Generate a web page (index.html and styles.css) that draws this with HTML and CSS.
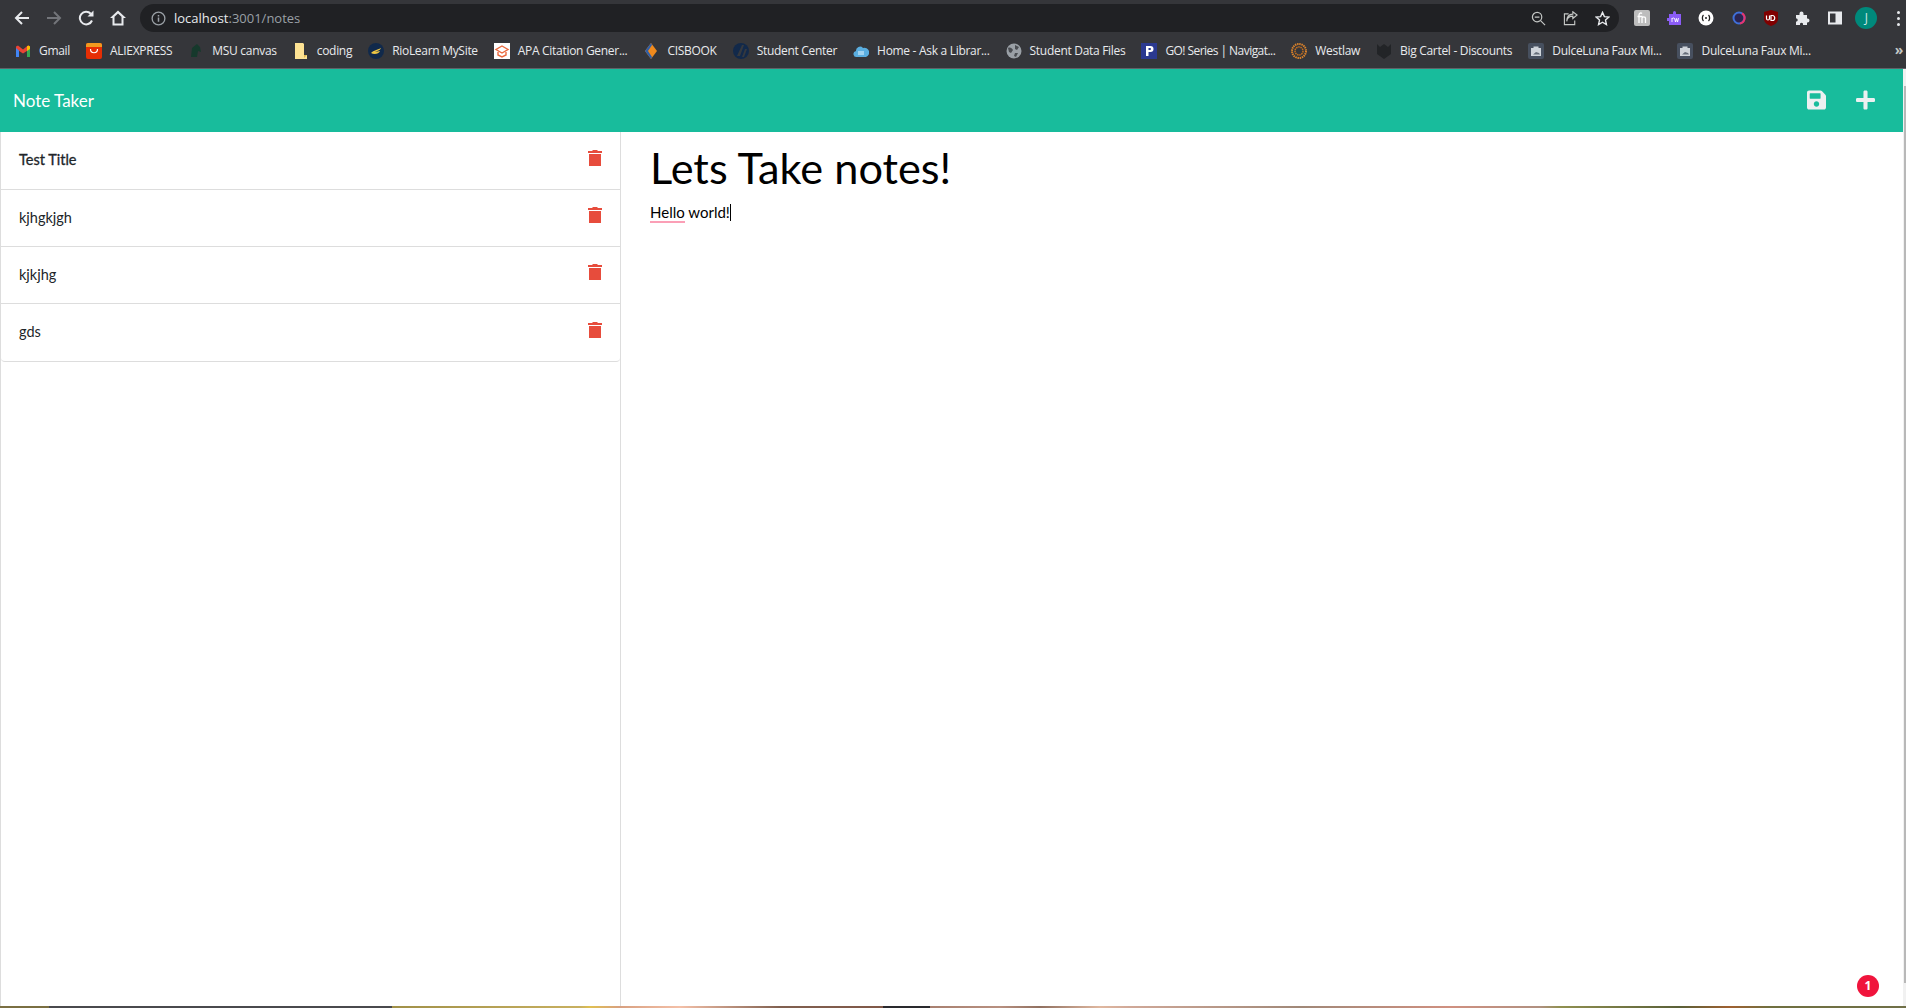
FILE: index.html
```html
<!DOCTYPE html>
<html lang="en">
<head>
    <meta charset="UTF-8">
    <meta name="viewport" content="width=device-width, initial-scale=1.0">
    <title>Note Taker</title>
    <link rel="stylesheet" href="styles.css">
</head>
<body>
<header class="browser">
    <div class="toolbar">
        <svg class="tool" viewBox="0 0 16 16"><path d="M15 8H2M8 2 2 8l6 6" fill="none" stroke="#e8eaed" stroke-width="2"/></svg>
        <svg class="tool" viewBox="0 0 16 16"><path d="M1 8h13M8 2l6 6-6 6" fill="none" stroke="#73757a" stroke-width="2"/></svg>
        <svg class="tool" viewBox="0 0 16 16"><path d="M14 10.500A6.300 6.300 0 1 1 12.800 3.800" fill="none" stroke="#e8eaed" stroke-width="2"/><path d="M9.500 6.500H15.500V.5z" fill="#e8eaed"/></svg>
        <svg class="tool" viewBox="0 0 16 16"><path d="M8 .5 0 8h2.500v7.500h11V8H16zM4.500 13.500V6.800L8 3.400l3.500 3.400v6.700z" fill="#e8eaed" fill-rule="evenodd"/></svg>
        <div class="omnibox">
            <svg class="info" viewBox="0 0 16 16"><circle cx="8" cy="8" r="6.800" fill="none" stroke="#9aa0a6" stroke-width="1.400"/><path d="M7.200 7h1.600v4.500H7.200zM7.200 4.300h1.600v1.600H7.200z" fill="#9aa0a6"/></svg>
            <span class="url">localhost<span class="url-rest">:3001/notes</span></span>
            <div class="omni-icons">
                <svg class="tool-sm" viewBox="0 0 16 16"><circle cx="6.500" cy="6.500" r="5" fill="none" stroke="#c4c7c5" stroke-width="1.300"/><path d="M4 6.500h5M10.200 10.200 15 15" stroke="#c4c7c5" stroke-width="1.300"/></svg>
                <svg class="tool-sm" viewBox="0 0 16 16"><path d="M6 3H1.500v11.500h11V10" fill="none" stroke="#c4c7c5" stroke-width="1.200"/><path d="M4 11c.5-4 3-5.500 6.500-5.500V8L15 4.200 10.500.8v2.500C6.500 3.500 4 6.500 4 11z" fill="none" stroke="#c4c7c5" stroke-width="1.200"/></svg>
                <svg class="tool-sm" viewBox="0 0 16 16"><path d="m8 1.500 2 4.500 4.800.5-3.600 3.200 1 4.800L8 12l-4.200 2.500 1-4.800-3.600-3.200L6 6z" fill="none" stroke="#e8eaed" stroke-width="1.500"/></svg>
            </div>
        </div>
        <div class="extensions">
            <svg class="ext" viewBox="0 0 16 16"><rect width="16" height="16" rx="2" fill="#bdbdbd"/><path d="M5 13V5c0-2 2-2.500 3-1.500M3.500 6.500h5M8 13V8c0-1.500 3.500-1.500 3.500 0v5" fill="none" stroke="#fff" stroke-width="1.300"/></svg>
            <svg class="ext" viewBox="0 0 16 16"><path d="M3 4h4V2.500a1.500 1.500 0 0 1 3 0V4h5v11H3v-4H1V8h2z" fill="#8b5cf6"/><path d="M6 8v4M6 9c.500-1 1-1 2-1M8.500 8l1 4 1-3.500 1 3.500 1-4" fill="none" stroke="#fff" stroke-width=".9"/></svg>
            <svg class="ext" viewBox="0 0 16 16"><circle cx="8" cy="8" r="7.500" fill="#fff"/><path d="M5.500 5C4 6.500 4 9.500 5.500 11M10.500 5c1.500 1.500 1.500 4.500 0 6M7 8h2" fill="none" stroke="#222" stroke-width="1.300"/></svg>
            <svg class="ext" viewBox="0 0 16 16"><circle cx="8" cy="8" r="5.500" fill="#2b2550" stroke="#3f6fd8" stroke-width="2"/><path d="M11 3.300A5.500 5.500 0 0 1 9 13.400" fill="none" stroke="#e8336f" stroke-width="2"/></svg>
            <svg class="ext" viewBox="0 0 16 16"><path d="M8 0 15 2v7c0 3.500-3.500 6-7 7-3.500-1-7-3.500-7-7V2z" fill="#800000"/><path d="M3.500 5.500v3c0 2 3 2 3 0v-3M8 5.500v5h1.500c3 0 3-5 0-5z" fill="none" stroke="#fff" stroke-width="1.200"/></svg>
            <svg class="ext" viewBox="0 0 16 16"><path d="M1 5h3.500V3.500a2 2 0 0 1 4 0V5H12v3.500h.5a2 2 0 0 1 0 4H12V15H8v-1.500a2 2 0 0 0-3 0V15H1v-3.500h1a2 2 0 0 0 0-3H1z" fill="#e8eaed"/></svg>
            <svg class="ext" viewBox="0 0 16 16"><path d="M1 1.500h14v13H1zM3 3.500v9h5.500v-9z" fill="#e8eaed" fill-rule="evenodd"/></svg>
            <span class="avatar">J</span>
            <span class="dots"><i></i><i></i><i></i></span>
        </div>
    </div>
    <nav class="bookmarks">
        <a class="mark"><svg viewBox="0 0 16 16"><path d="M1 3.500 3 2.500 8 6.500l5-4 2 1V6L8 10.500 1 6z" fill="#ea4335"/><path d="M1 5l3 2.500V14H1z" fill="#4285f4"/><path d="M15 5l-3 2.500V14h3z" fill="#34a853"/><path d="M12 3.300 13.500 2.500 15 3.500V6l-3 2z" fill="#fbbc04"/></svg>Gmail</a>
        <a class="mark"><svg viewBox="0 0 16 16"><rect width="16" height="16" rx="2" fill="#e62e04"/><path d="M0 2a2 2 0 0 1 2-2h12a2 2 0 0 1 2 2v2H0z" fill="#f29a1f"/><path d="M4.500 6c0 5 7 5 7 0" fill="none" stroke="#fff" stroke-width="1.200"/></svg>ALIEXPRESS</a>
        <a class="mark"><svg viewBox="0 0 16 16"><path d="M3 14 4 5l5-4 3 3 1 5-3-1-1 6z" fill="#16392c"/></svg>MSU canvas</a>
        <a class="mark"><svg viewBox="0 0 16 16"><path d="M2 0h8l1 1v11h3v4H2z" fill="#fde293"/><path d="M11 12h3l-3 3z" fill="#e0b84c"/></svg>coding</a>
        <a class="mark"><svg viewBox="0 0 16 16"><circle cx="8" cy="8" r="8" fill="#10294b"/><path d="M3 10c3-3 6-3 10-5-1 3-5 3-6 4l5-1c-1 3-6 4-9 2z" fill="#eec643"/></svg>RioLearn MySite</a>
        <a class="mark"><svg viewBox="0 0 16 16"><rect width="16" height="16" fill="#fff"/><path d="m8 3 6 3.500L8 10 2 6.500zM4 9v3l4 2 4-2V9" fill="none" stroke="#ea6a3f" stroke-width="1.400"/></svg>APA Citation Gener...</a>
        <a class="mark"><svg viewBox="0 0 16 16"><path d="M8 0 14 8l-6 8-6-8z" fill="#f08a1d"/><path d="M8 0 2 8l6 8 1-2-4-6 4-6z" fill="#2f5fa8"/></svg>CISBOOK</a>
        <a class="mark"><svg viewBox="0 0 16 16"><circle cx="8" cy="8" r="8" fill="#12294a"/><path d="M4 13 9 2h2L7 13zM9 14l3-8h2l-3 8z" fill="#35393f"/></svg>Student Center</a>
        <a class="mark"><svg viewBox="0 0 16 16"><path d="M4 14a3 3 0 0 1-1-6 4 4 0 0 1 7-3 3.500 3.500 0 0 1 3 9z" fill="#5aaee0"/><rect x="5" y="8" width="6" height="4" fill="#9fd2f0"/></svg>Home - Ask a Librar...</a>
        <a class="mark"><svg viewBox="0 0 16 16"><circle cx="8" cy="8" r="7.500" fill="#9aa0a6"/><path d="M2 5c2-1 4 0 5 2l-2 3-2-1zM9 2l4 2-2 3-2-1zM9 10l3 0-2 4-2-1z" fill="#4a4d52"/></svg>Student Data Files</a>
        <a class="mark mark-tight"><svg viewBox="0 0 16 16"><rect width="16" height="16" fill="#2b3990"/><path d="M5 3h4.500a3 3 0 0 1 0 6H7.500v4H5zM7.500 5v2H9a1 1 0 0 0 0-2z" fill="#fff" fill-rule="evenodd"/></svg>GO! Series | Navigat...</a>
        <a class="mark"><svg viewBox="0 0 16 16"><circle cx="8" cy="8" r="7" fill="none" stroke="#d9822b" stroke-width="2" stroke-dasharray="1.500 .7"/><circle cx="8" cy="8" r="4" fill="none" stroke="#c46f1f" stroke-width="1.500" stroke-dasharray="1.500 .7"/></svg>Westlaw</a>
        <a class="mark"><svg viewBox="0 0 16 16"><path d="M1 1l3 3 4-3 4 3 3-3v10l-7 5-7-5z" fill="#222427"/></svg>Big Cartel - Discounts</a>
        <a class="mark"><svg viewBox="0 0 16 16"><rect width="16" height="16" rx="2" fill="#47505f"/><path d="M5.500 5V3.500h5V5H13v8H3V5z" fill="#cfd4da"/><path d="M5 11.500 8 9l3 1 1 1.500z" fill="#666e7a"/></svg>DulceLuna Faux Mi...</a>
        <a class="mark"><svg viewBox="0 0 16 16"><rect width="16" height="16" rx="2" fill="#47505f"/><path d="M5.500 5V3.500h5V5H13v8H3V5z" fill="#cfd4da"/><path d="M5 11.500 8 9l3 1 1 1.500z" fill="#666e7a"/></svg>DulceLuna Faux Mi...</a>
        <span class="more">»</span>
    </nav>
</header>

<div class="viewport">
    <div class="page">
        <div class="navbar">
            <span class="brand">Note Taker</span>
            <div class="nav-icons">
                <svg class="nav-icon" viewBox="0 0 448 512"><path d="M433.900 129.900l-83.900-83.900A48 48 0 0 0 316.100 32H48C21.500 32 0 53.500 0 80v352c0 26.500 21.500 48 48 48h352c26.500 0 48-21.500 48-48V163.900a48 48 0 0 0-14.100-34zM224 416c-35.300 0-64-28.700-64-64s28.700-64 64-64 64 28.700 64 64-28.700 64-64 64zm96-304.500V212c0 6.600-5.400 12-12 12H76c-6.600 0-12-5.400-12-12V108c0-6.600 5.400-12 12-12h228.500c3.200 0 6.200 1.300 8.500 3.500l3.500 3.500c2.200 2.300 3.500 5.300 3.500 8.500z"/></svg>
                <svg class="nav-icon" viewBox="0 0 448 512"><path d="M416 208H272V64c0-17.700-14.300-32-32-32h-32c-17.700 0-32 14.300-32 32v144H32c-17.700 0-32 14.300-32 32v32c0 17.700 14.300 32 32 32h144v144c0 17.700 14.300 32 32 32h32c17.700 0 32-14.300 32-32V304h144c17.700 0 32-14.300 32-32v-32c0-17.700-14.300-32-32-32z"/></svg>
            </div>
        </div>
        <div class="columns">
            <ul class="note-list">
                <li class="note-item note-title">Test Title<svg class="trash" viewBox="0 0 14 16"><path d="M4.500 0h5v1H14v2H0V1h4.500zM1 4h12v12H1z"/></svg></li>
                <li class="note-item">kjhgkjgh<svg class="trash" viewBox="0 0 14 16"><path d="M4.500 0h5v1H14v2H0V1h4.500zM1 4h12v12H1z"/></svg></li>
                <li class="note-item">kjkjhg<svg class="trash" viewBox="0 0 14 16"><path d="M4.500 0h5v1H14v2H0V1h4.500zM1 4h12v12H1z"/></svg></li>
                <li class="note-item note-last">gds<svg class="trash" viewBox="0 0 14 16"><path d="M4.500 0h5v1H14v2H0V1h4.500zM1 4h12v12H1z"/></svg></li>
            </ul>
            <main class="editor">
                <h1 class="note-heading">Lets Take notes!</h1>
                <p class="note-body"><span class="misspelt">Hello</span> world!<span class="caret"></span></p>
            </main>
        </div>
    </div>
    <div class="scrollbar"><div class="thumb"></div></div>
    <span class="badge">1</span>
</div>
<div class="taskbar-edge"></div>
</body>
</html>
```

FILE: styles.css
```css
* {
    box-sizing: border-box;
}
html, body {
    height: 100%;
}
body {
    margin: 0;
    display: flex;
    flex-direction: column;
    overflow: hidden;
    background-color: #fff;
    font-family: 'Lato', sans-serif;
}

/* browser chrome */
.browser {
    height: 69px;
    background-color: #35363a;
    border-bottom: 1px solid #5f6368;
    color: #e8eaed;
    font-family: 'Open Sans', sans-serif;
}
.toolbar {
    height: 33px;
    display: flex;
    align-items: center;
    padding: 3px 0 0 14px;
}
.tool {
    width: 16px;
    height: 16px;
    margin-right: 16px;
    flex: none;
}
.omnibox {
    width: 1479px;
    height: 28px;
    margin-left: -2px;
    display: flex;
    align-items: center;
    padding: 0 9px 0 11px;
    border-radius: 14px;
    background-color: #202124;
}
.info {
    width: 15px;
    height: 15px;
    margin-right: 8px;
}
.url {
    font-size: 13px;
}
.url-rest {
    color: #9aa0a6;
}
.omni-icons {
    margin-left: auto;
    display: flex;
    gap: 17px;
}
.tool-sm {
    width: 15px;
    height: 15px;
}
.extensions {
    flex: 1;
    display: flex;
    align-items: center;
    padding-left: 15px;
}
.ext {
    width: 16px;
    height: 16px;
    margin-right: 16.200px;
    flex: none;
}
.avatar {
    width: 22px;
    height: 22px;
    margin-left: -4px;
    border-radius: 50%;
    background-color: #00897b;
    color: #cfe8e4;
    font-size: 12px;
    line-height: 22px;
    text-align: center;
}
.dots {
    display: flex;
    flex-direction: column;
    gap: 3px;
    margin-left: 19.500px;
}
.dots i {
    width: 3px;
    height: 3px;
    border-radius: 50%;
    background-color: #e8eaed;
}
.bookmarks {
    height: 35px;
    display: flex;
    align-items: center;
    padding-left: 15px;
    position: relative;
    font-size: 12px;
    letter-spacing: -0.3px;
}
.mark {
    display: flex;
    align-items: center;
    margin-right: 16px;
    white-space: nowrap;
}
.mark-tight {
    letter-spacing: -0.55px;
}
.mark svg {
    width: 16px;
    height: 16px;
    margin-right: 8px;
    flex: none;
}
.more {
    position: absolute;
    right: 3px;
    top: 7px;
    font-size: 14px;
    font-weight: bold;
    color: #c4c7c5;
}

/* app */
.viewport {
    flex: 1;
    display: flex;
    position: relative;
    min-height: 0;
}
.page {
    flex: 1;
    display: flex;
    flex-direction: column;
    min-width: 0;
}
.scrollbar {
    width: 3px;
    padding: 17px 0 0 1px;
    background-color: #f1f1f1;
}
.thumb {
    height: 897px;
    background-color: #b8b8b8;
}
.navbar {
    height: 63px;
    display: flex;
    align-items: center;
    justify-content: space-between;
    padding: 0 28px 0 13px;
    background-color: #18bc9c;
}
.brand {
    color: #fff;
    font-size: 17px;
}
.nav-icons {
    display: flex;
    gap: 30px;
    padding-bottom: 2px;
}
.nav-icon {
    width: 19px;
    height: 22px;
    fill: #ecf0f1;
}
.columns {
    flex: 1;
    display: flex;
    min-height: 0;
}
.note-list {
    width: 621px;
    margin: 0;
    padding: 0;
    list-style: none;
    border-left: 1px solid #ddd;
    border-right: 1px solid #ddd;
    flex: none;
}
.note-item {
    height: 57px;
    display: flex;
    align-items: center;
    justify-content: space-between;
    padding: 0 18px 2px;
    border-bottom: 1px solid #ddd;
    font-size: 14.500px;
    color: #212529;
}
.note-title,
.note-last {
    height: 58px;
}
.note-title {
    -webkit-text-stroke: 0.3px #212529;
}
.note-last {
    border-radius: 0 0 4px 4px;
}
.trash {
    width: 14px;
    height: 16px;
    margin-top: -4px;
    fill: #e74c3c;
}
.editor {
    flex: 1;
    padding: 0 29px;
    color: #000;
}
.note-heading {
    margin: 9px 0 0;
    font-size: 43.300px;
    font-weight: 400;
    line-height: 52px;
}
.note-body {
    margin: 10px 0 0;
    font-size: 15px;
}
.misspelt {
    border-bottom: 2px solid #fb9fb6;
}
.caret {
    display: inline-block;
    width: 1px;
    height: 17px;
    vertical-align: -3px;
    background-color: #000;
}
.badge {
    position: absolute;
    right: 27px;
    bottom: 9px;
    width: 22px;
    height: 22px;
    border-radius: 50%;
    background-color: #f0143c;
    color: #fff;
    font-family: 'Open Sans', sans-serif;
    font-size: 12px;
    font-weight: 700;
    line-height: 22px;
    text-align: center;
}
/* strip of desktop wallpaper under the window */
.taskbar-edge {
    height: 2px;
    background: linear-gradient(90deg, #7a6f42 0, #7a6f42 49px, #4a4a4e 49px, #4a4a4e 392px, #a09048 392px, #c8b060 580px, #e0c050 590px, #d8a080 620px, #f4c0a8 680px, #806050 780px, #805848 883px, #2a2a2e 883px, #2a2a2e 930px, #a88070 930px, #b89080 1000px, #907060 1040px, #e0b8a0 1100px, #d0a898 1130px, #a08878 1300px, #d09080 1450px, #b09080 1540px, #909050 1560px, #5a6038 1680px, #a06030 1730px, #707040 1770px, #707048 100%);
}
```
